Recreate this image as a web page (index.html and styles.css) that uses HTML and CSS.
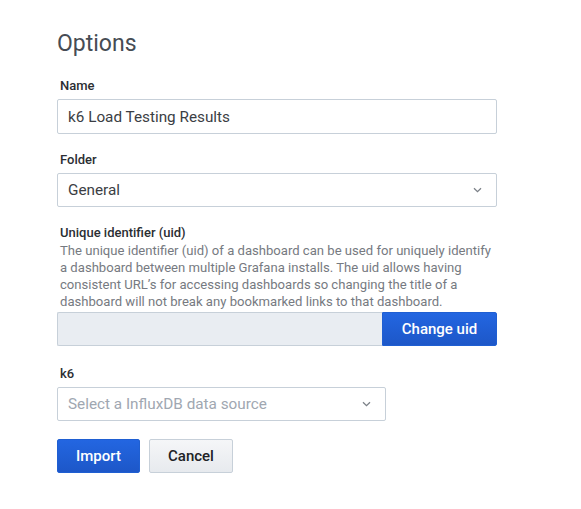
FILE: index.html
```html
<!DOCTYPE html>
<html>
<head>
<meta charset="utf-8">
<link rel="stylesheet" href="styles.css">
</head>
<body>
<div class="page">
  <h2 class="title">Options</h2>

  <div class="field">
    <label class="label">Name</label>
    <div class="input input-h35">k6 Load Testing Results</div>
  </div>

  <div class="field">
    <label class="label">Folder</label>
    <div class="input select input-h34">
      <span>General</span>
      <svg class="chev" width="9" height="6" viewBox="0 0 9 6"><path d="M1 1.2 L4.5 4.6 L8 1.2" fill="none" stroke="#7b8087" stroke-width="1.3"/></svg>
    </div>
  </div>

  <div class="field">
    <label class="label label-tight">Unique identifier (uid)</label>
    <div class="desc">The unique identifier (uid) of a dashboard can be used for uniquely identify<br>a dashboard between multiple Grafana installs. The uid allows having<br>consistent URL’s for accessing dashboards so changing the title of a<br>dashboard will not break any bookmarked links to that dashboard.</div>
    <div class="uid-row">
      <div class="uid-input"></div>
      <button class="btn btn-primary btn-uid">Change uid</button>
    </div>
  </div>

  <div class="field field-k6">
    <label class="label">k6</label>
    <div class="input select input-k6">
      <span class="placeholder">Select a InfluxDB data source</span>
      <svg class="chev" width="9" height="6" viewBox="0 0 9 6"><path d="M1 1.2 L4.5 4.6 L8 1.2" fill="none" stroke="#7b8087" stroke-width="1.3"/></svg>
    </div>
  </div>

  <div class="actions">
    <button class="btn btn-primary btn-import">Import</button>
    <button class="btn btn-secondary">Cancel</button>
  </div>
</div>
</body>
</html>
```

FILE: styles.css
```css
* { box-sizing: border-box; }
html, body {
  margin: 0;
  padding: 0;
  background: #ffffff;
  font-family: Roboto, "Liberation Sans", Arial, sans-serif;
}
.page {
  padding: 31px 0 0 57px;
  width: 497px;
  box-sizing: content-box;
}
.title {
  margin: 0 0 20px;
  font-size: 23px;
  line-height: 26px;
  font-weight: 400;
  color: #464c54;
}
.field {
  margin-bottom: 17px;
}
.field-k6 {
  padding-top: 2px;
  margin-bottom: 18px;
}
.label {
  display: block;
  font-size: 13px;
  line-height: 18px;
  font-weight: 500;
  color: #2b2e33;
  margin-bottom: 4px;
  padding-left: 3px;
}
.label-tight {
  margin-bottom: 0;
}
.input {
  width: 440px;
  border: 1px solid #c7d0d9;
  border-radius: 2px;
  background: #fff;
  padding: 0 10px;
  font-size: 15.3px;
  color: #3b3e44;
  display: flex;
  align-items: center;
}
.input-h35 { height: 35px; }
.input-h34 { height: 34px; }
.select {
  justify-content: space-between;
  padding-right: 14px;
}
.input-k6 {
  width: 329px;
  height: 34px;
}
.placeholder { color: #a0a7b1; }
.chev { display: block; }
.desc {
  font-size: 13.1px;
  line-height: 17px;
  color: #767a81;
  margin-bottom: 2px;
  padding-left: 3px;
  width: 470px;
  white-space: nowrap;
}
.uid-row {
  display: flex;
  height: 34px;
  width: 440px;
}
.uid-input {
  flex: 1;
  background: #e9edf2;
  border: 1px solid #c7d0d9;
  border-right: none;
  border-radius: 2px 0 0 2px;
}
.btn {
  font-family: Roboto, "Liberation Sans", Arial, sans-serif;
  font-size: 15px;
  font-weight: 500;
  height: 34px;
  border-radius: 2px;
  cursor: pointer;
  padding: 0 18px;
}
.btn-primary {
  color: #fff;
  background: linear-gradient(to bottom, #2366e1, #1d57c8);
  border: 1px solid #1f5fd2;
}
.btn-uid {
  width: 115px;
  border-radius: 0 2px 2px 0;
}
.btn-import {
  width: 83px;
}
.btn-secondary {
  color: #202226;
  background: linear-gradient(to bottom, #f5f6f8, #e7eaee);
  border: 1px solid #c7d0d9;
  width: 84px;
}
.actions {
  display: flex;
  gap: 9px;
}
```
